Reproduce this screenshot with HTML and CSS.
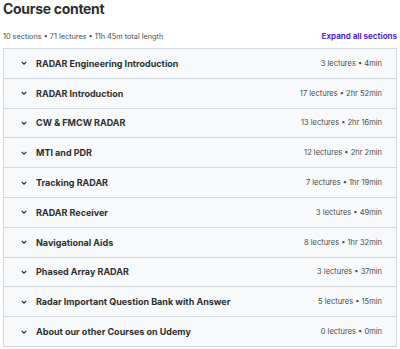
FILE: index.html
```html
<!DOCTYPE html>
<html lang="en">
<head>
    <meta charset="UTF-8">
    <title>Course content</title>
    <link rel="stylesheet" href="styles.css">
</head>
<body>
    <div class="curriculum">
        <h2>Course content</h2>
        <div class="summary">
            <span>10 sections • 71 lectures • 11h 45m total length</span>
            <button type="button" class="expand-all">Expand all sections</button>
        </div>

        <div class="sections">
            <div class="section">
                <span class="chevron"><svg viewBox="0 0 10 10"><path d="M2.8 4 5 6.2 7.2 4"/></svg></span>
                <span class="title">RADAR Engineering Introduction</span>
                <span class="meta">3 lectures • 4min</span>
            </div>
            <div class="section">
                <span class="chevron"><svg viewBox="0 0 10 10"><path d="M2.8 4 5 6.2 7.2 4"/></svg></span>
                <span class="title">RADAR Introduction</span>
                <span class="meta">17 lectures • 2hr 52min</span>
            </div>
            <div class="section">
                <span class="chevron"><svg viewBox="0 0 10 10"><path d="M2.8 4 5 6.2 7.2 4"/></svg></span>
                <span class="title">CW &amp; FMCW RADAR</span>
                <span class="meta">13 lectures • 2hr 16min</span>
            </div>
            <div class="section">
                <span class="chevron"><svg viewBox="0 0 10 10"><path d="M2.8 4 5 6.2 7.2 4"/></svg></span>
                <span class="title">MTI and PDR</span>
                <span class="meta">12 lectures • 2hr 2min</span>
            </div>
            <div class="section">
                <span class="chevron"><svg viewBox="0 0 10 10"><path d="M2.8 4 5 6.2 7.2 4"/></svg></span>
                <span class="title">Tracking RADAR</span>
                <span class="meta">7 lectures • 1hr 19min</span>
            </div>
            <div class="section">
                <span class="chevron"><svg viewBox="0 0 10 10"><path d="M2.8 4 5 6.2 7.2 4"/></svg></span>
                <span class="title">RADAR Receiver</span>
                <span class="meta">3 lectures • 49min</span>
            </div>
            <div class="section">
                <span class="chevron"><svg viewBox="0 0 10 10"><path d="M2.8 4 5 6.2 7.2 4"/></svg></span>
                <span class="title">Navigational Aids</span>
                <span class="meta">8 lectures • 1hr 32min</span>
            </div>
            <div class="section">
                <span class="chevron"><svg viewBox="0 0 10 10"><path d="M2.8 4 5 6.2 7.2 4"/></svg></span>
                <span class="title">Phased Array RADAR</span>
                <span class="meta">3 lectures • 37min</span>
            </div>
            <div class="section">
                <span class="chevron"><svg viewBox="0 0 10 10"><path d="M2.8 4 5 6.2 7.2 4"/></svg></span>
                <span class="title">Radar Important Question Bank with Answer</span>
                <span class="meta">5 lectures • 15min</span>
            </div>
            <div class="section">
                <span class="chevron"><svg viewBox="0 0 10 10"><path d="M2.8 4 5 6.2 7.2 4"/></svg></span>
                <span class="title">About our other Courses on Udemy</span>
                <span class="meta">0 lectures • 0min</span>
            </div>
        </div>
    </div>
</body>
</html>
```

FILE: styles.css
```css
:root {
    --text: #2d2f31;
    --muted: #4a4c4e;
    --border: #d1d7dc;
    --row-bg: #f7f9fa;
    --purple: #5624d0;
}

* {
    box-sizing: border-box;
    font-family: Inter, 'Liberation Sans', sans-serif;
}

body {
    margin: 0;
    padding: 0 3px;
    background: white;
    color: var(--text);
}

h2 {
    margin: 0;
    padding-top: 1px;
    font-size: 14px;
    line-height: 16px;
    font-weight: 700;
    letter-spacing: -0.3px;
}

.summary {
    display: flex;
    justify-content: space-between;
    align-items: center;
    height: 31px;
    padding-top: 7px;
    font-size: 7.3px;
    color: var(--muted);
}

.expand-all {
    background: none;
    border: none;
    padding: 0;
    font-size: 8px;
    font-weight: 700;
    color: var(--purple);
    cursor: pointer;
}

.sections {
    border: 1px solid var(--border);
    border-top: none;
}

.section {
    display: flex;
    align-items: center;
    height: 29.8px;
    padding: 0 14px 0 15px;
    background: var(--row-bg);
    border-top: 1px solid var(--border);
}

.chevron {
    display: flex;
    width: 10px;
    height: 10px;
    margin-right: 7px;
}

.chevron svg {
    width: 10px;
    height: 10px;
    fill: none;
    stroke: var(--text);
    stroke-width: 1.1;
}

.title {
    flex: 1;
    font-size: 9px;
    font-weight: 700;
}

.meta {
    font-size: 7.5px;
    color: var(--muted);
}
```
